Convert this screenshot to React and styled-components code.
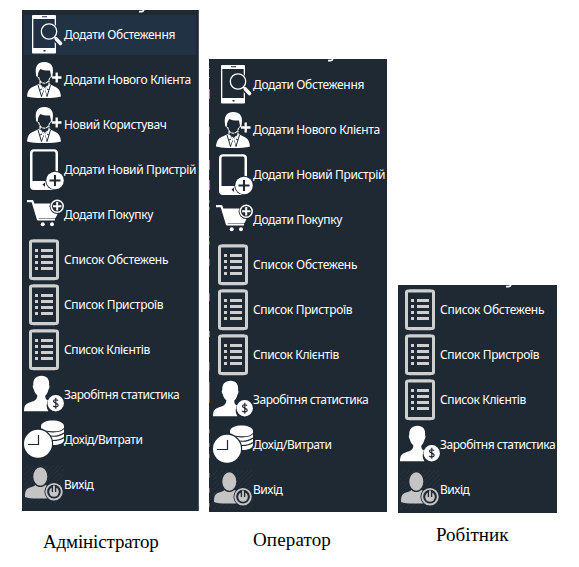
import React from "react";
import styled, { createGlobalStyle } from "styled-components";

const BG = "#1f2933";
const GREY = "#cfcfcf";

const GlobalStyle = createGlobalStyle`
  body { margin: 0; background: #fff; overflow: hidden; }
  * { box-sizing: border-box; }
`;

const Page = styled.main`
  width: 579px;
  height: 567px;
  display: flex;
  align-items: flex-start;
  background: #fff;
`;

const Column = styled.section`
  width: ${(p) => p.$width}px;
  margin-left: ${(p) => p.$gap}px;
  padding-top: ${(p) => p.$top}px;
  flex: none;
`;

const Panel = styled.nav`
  position: relative;
  display: flex;
  flex-direction: column;
  gap: 5px;
  height: ${(p) => p.$height}px;
  padding: ${(p) => p.$pad};
  background: ${BG};
  border-right: ${(p) => (p.$edge ? "1px solid #45566a" : "0")};
`;

const Tail = styled.svg`
  position: absolute;
  top: 0;
  left: ${(p) => p.$left}px;
  width: 8px;
  height: 3px;
`;

const EdgeMarks = styled.svg`
  position: absolute;
  left: 0;
  top: 0;
  width: 1px;
  height: 100%;
`;

const Row = styled.div`
  display: flex;
  align-items: center;
  height: 40px;
  flex: none;
  color: ${(p) => (p.$active ? "#213244" : BG)};
  background: currentColor;
`;

const Icon = styled.svg`
  width: 40px;
  height: 40px;
  flex: none;
  overflow: visible;
`;

const Label = styled.span`
  font: 12px/18px "Noto Sans", "Open Sans", sans-serif;
  letter-spacing: ${(p) => p.$track}px;
  color: #fff;
  white-space: nowrap;
`;

const Caption = styled.div`
  margin: ${(p) => p.$margin};
  font: 19px/22px "Liberation Serif", serif;
  letter-spacing: ${(p) => p.$track}px;
  color: #000;
  white-space: nowrap;
`;

const Survey = () => (
  <Icon viewBox="0 0 40 40">
    <path fill="#fff" fillRule="evenodd" d="M9 0h22q1 0 1 1v36.500q0 1-1 1H9q-1 0-1-1V1q0-1 1-1zM9.300 4v29h21.400V4zM18 1.200v1h5v-1zM19.500 35v1.600h2V35z" />
    <circle cx="25" cy="16.500" r="9" fill="currentColor" />
    <path d="M30 22l7 7.500" stroke="currentColor" strokeWidth="6" />
    <circle cx="25" cy="16.500" r="7.700" fill="none" stroke="#fff" strokeWidth="1.300" />
    <path d="M30.300 22l2 2" stroke="#fff" strokeWidth="1.500" />
    <path d="M32.300 24l4.200 4.500" stroke="#fff" strokeWidth="3.600" strokeLinecap="round" />
  </Icon>
);

const Client = () => (
  <Icon viewBox="0 0 40 40">
    <path fill="#fff" d="M12.300 16C10.500 7 13 2 20.300 2S30.500 7 28.300 16h-1.300l-1-5.500c-3.500.2-7.500-.3-9.500-1.500-1.300 1-2.300 3-2.800 7z" />
    <path fill="none" stroke="#fff" strokeWidth="1.100" strokeDasharray="3 .6" d="M13 14c-.6 2 .2 3.200 1.800 3.700 1 4 3.200 5.500 5.500 5.500s4.500-1.500 5.500-5.500c1.600-.5 2.400-1.700 1.800-3.700M16 21v4l4.500 3.500L25 25v-4" />
    <path fill="#fff" d="M15 24l-6 2.800c-4 1.700-5.500 4.700-6 9.700 4 1.200 10 1.500 17 1.500s13-.3 17-1.500c-.5-5-2-8-6-9.700L25.500 24l-5 6z" />
    <path stroke={BG} strokeWidth="1" fill="none" d="M14 25l3.500 11.500L20.500 29M26.500 25L23 36.500 20.500 29M16 30l2-1M25 30l-2-1" />
    <path fill="#fff" d="M19 28.500h3l-.8 2.500 1.300 4-2 2-2-2 1.300-4z" />
    <path stroke={BG} strokeWidth="4.500" d="M29.500 17.500h8M33 13v9" />
    <path stroke="#fff" strokeWidth="2.300" d="M28 17.500h9.500M32.700 12.500v10" />
  </Icon>
);

const Device = () => (
  <Icon viewBox="0 0 40 40">
    <path fill="#fff" fillRule="evenodd" d="M10-.7h20a4 4 0 0 1 4 4V36a4 4 0 0 1-4 4H10a4 4 0 0 1-4-4V3.300a4 4 0 0 1 4-4zM10 1.500Q8.500 1.500 8.500 3.500V31h23V3.500q0-2-1.500-2z" />
    <path fill={BG} d="M18.500 34.500l2.500-2v4.500z" />
    <circle cx="31" cy="30.500" r="9.700" fill={BG} />
    <circle cx="31" cy="30.500" r="8.800" fill="#fff" />
    <path stroke={BG} strokeWidth="2.100" d="M25.500 30.500h11M31 25v11" />
  </Icon>
);

const Cart = () => (
  <Icon viewBox="0 0 40 40">
    <path fill="none" stroke="#fff" strokeWidth="2.200" d="M3 6.200h5.500l5.500 18.300h17" strokeLinejoin="round" />
    <path fill="#fff" d="M9 8.500h18l2 8.500h5.500l-3 6H13.500z" />
    <circle cx="18.700" cy="29.300" r="2" fill="#fff" />
    <circle cx="28" cy="29.300" r="2" fill="#fff" />
    <circle cx="33.200" cy="11.300" r="7.600" fill={BG} />
    <circle cx="33.200" cy="11.300" r="6" fill={BG} stroke="#fff" strokeWidth="1.500" />
    <path stroke="#fff" strokeWidth="2" d="M29 11.300h8.500M33.200 7v8.500" />
  </Icon>
);

const List = () => (
  <Icon viewBox="0 0 40 40">
    <path stroke="#777e84" strokeWidth="1" d="M9-.5h22M9 40h22" />
    <rect x="6.500" y="1" width="27" height="37.500" rx="1.500" fill="none" stroke={GREY} strokeWidth="3" />
    {[9, 15, 21, 27].map((y) => (
      <path key={y} fill={GREY} d={`M11 ${y}h3v3h-3zM17 ${y}h12v3H17z`} />
    ))}
  </Icon>
);

const Salary = () => (
  <Icon viewBox="0 0 40 40">
    <path fill="#fff" d="M17.500.7c5.500 0 8.300 3.800 7.600 9.500.8.700.3 3.300-.7 4.500-.6 3-2 4.800-3.200 6 .2 2.800.8 4 2.800 4.800-2 4.500-1.500 7.500.5 10.700H0c.2-5.500 1.200-7 5-8.500 5-1.800 8.300-2.500 8.300-7.500-2-1.600-3-3.500-3.500-6-1.200-1-1.300-3.500-.5-4.500C8.900 4.500 12 .7 17.500.700z" />
    <circle cx="31.700" cy="28.300" r="8.200" fill="#fff" />
    <path fill="none" stroke={BG} strokeWidth="1.200" d="M34 25.600c-1-1.200-4.500-1.300-4.500.6s4.700 1.900 4.700 4-4 2.100-5 .6M31.800 22.800v11" />
  </Icon>
);

const Income = () => (
  <Icon viewBox="0 0 40 40">
    <path fill="#fff" d="M17 6c0-7.500 23-7.500 23 0v14c0 3-5 5-11 5L17 12z" />
    <path fill="none" stroke={BG} strokeWidth="1.100" d="M17.500 8.500C20 12.500 36 13.500 40 8.500M23 15.500c6 1.300 13 .5 17-2.500M27 20.500c5 .3 9.500-.5 13-3" />
    <circle cx="14" cy="23.800" r="15.200" fill={BG} />
    <circle cx="14" cy="23.800" r="14" fill="#fff" />
    <path fill="none" stroke={BG} strokeWidth="1.200" d="M14.500 15v9.500H4" />
  </Icon>
);

const Exit = () => (
  <Icon viewBox="0 0 40 40">
    <path stroke="#293640" strokeWidth=".7" d="M0 5L5 0M0 10L10 0M0 15L15 0M0 20L20 0M0 25L25 0M0 30L30 0M0 35L35 0M0 39L39 0M5 39L40 4M10 39l30-30M15 39l25-25M20 39l20-20M25 39l15-15M30 39l10-10M35 39l5-5" />
    <ellipse cx="16.300" cy="11.500" rx="7" ry="9.200" fill="#c4c4c4" />
    <path fill="#c4c4c4" d="M11.500 20c2 2.800 7.500 2.800 9.500 0l4 1.500v12H13c-5 0-9-.5-12-1.500 0-6 1-8 5-9.500 2.500-.8 4.500-1.300 5.500-2.500z" />
    <circle cx="30" cy="26.700" r="9.600" fill={BG} />
    <circle cx="30" cy="26.700" r="7.800" fill={BG} stroke="#c4c4c4" strokeWidth="1.900" />
    <circle cx="30" cy="27" r="4.800" fill="#c4c4c4" />
    <path stroke={BG} strokeWidth="4.500" d="M30 20v7" />
    <path stroke="#c4c4c4" strokeWidth="1.900" d="M30 20.500v7" />
  </Icon>
);

const items = {
  survey: [Survey, "Додати Обстеження", -0.35],
  client: [Client, "Додати Нового Клієнта", -0.35],
  user: [Client, "Новий Користувач", -0.35],
  device: [Device, "Додати Новий Пристрій", -0.35],
  purchase: [Cart, "Додати Покупку", -0.35],
  surveys: [List, "Список Обстежень", -0.25],
  devices: [List, "Список Пристроїв", -0.31],
  clients: [List, "Список Клієнтів", -0.36],
  salary: [Salary, "Заробітня статистика", -0.45],
  income: [Income, "Дохід/Витрати", -0.45],
  exit: [Exit, "Вихід", -0.5],
};

const edgeMarks = [
  ["#4f9a4a", 9, 1], ["#4f9a4a", 18, 1], ["#5fae55", 30, 10], ["#5a8450", 68, 7],
  ["#5fae55", 101, 10], ["#5fae55", 121, 10], ["#4d7a48", 141, 3], ["#4d7a48", 148, 3],
  ["#4d7a48", 177, 2], ["#4d7a48", 182, 4], ["#4d7a48", 200, 7], ["#3d9296", 234, 8],
  ["#b08468", 272, 6], ["#59636b", 303, 9], ["#1c86d8", 323, 21], ["#6b6660", 370, 4],
  ["#6b6660", 384, 4], ["#6b6660", 395, 4], ["#6b6660", 414, 5], ["#6b6660", 429, 5],
  ["#6b6660", 444, 4],
];

const Menu = ({ keys, active }) =>
  keys.map((key) => {
    const [Glyph, text, track] = items[key];
    return (
      <Row key={key} $active={key === active}>
        <Glyph />
        <Label $track={track}>{text}</Label>
      </Row>
    );
  });

const TitleTail = ({ left }) => (
  <Tail $left={left} viewBox="0 0 8 3">
    <path d="M1 1.600h2.500Q5 1.500 6 0" fill="none" stroke="#fff" strokeWidth="1.600" />
  </Tail>
);

export default function App() {
  return (
    <Page>
      <GlobalStyle />
      <Column $width={177} $gap={22} $top={10}>
        <Panel $height={501} $pad="5px 2px 0 2px" $edge>
          <TitleTail left={116} />
          <Menu
            active="survey"
            keys={["survey", "client", "user", "device", "purchase", "surveys", "devices", "clients", "salary", "income", "exit"]}
          />
        </Panel>
        <Caption $margin="20px 0 0 21px" $track={-0.15}>Адміністратор</Caption>
      </Column>
      <Column $width={178} $gap={10} $top={59}>
        <Panel $height={453} $pad="6px 0 0 4px">
          <TitleTail left={118} />
          <EdgeMarks>
            {edgeMarks.map(([fill, y, height]) => (
              <rect key={y} width="1" y={y} height={height} fill={fill} />
            ))}
          </EdgeMarks>
          <Menu keys={["survey", "client", "device", "purchase", "surveys", "devices", "clients", "salary", "income", "exit"]} />
        </Panel>
        <Caption $margin="17px 0 0 44px" $track={0.15}>Оператор</Caption>
      </Column>
      <Column $width={159} $gap={11} $top={285}>
        <Panel $height={228} $pad="5px 0 0 2px">
          <TitleTail left={107} />
          <Menu keys={["surveys", "devices", "clients", "salary", "exit"]} />
        </Panel>
        <Caption $margin="11px 0 0 38px" $track={0}>Робітник</Caption>
      </Column>
    </Page>
  );
}
